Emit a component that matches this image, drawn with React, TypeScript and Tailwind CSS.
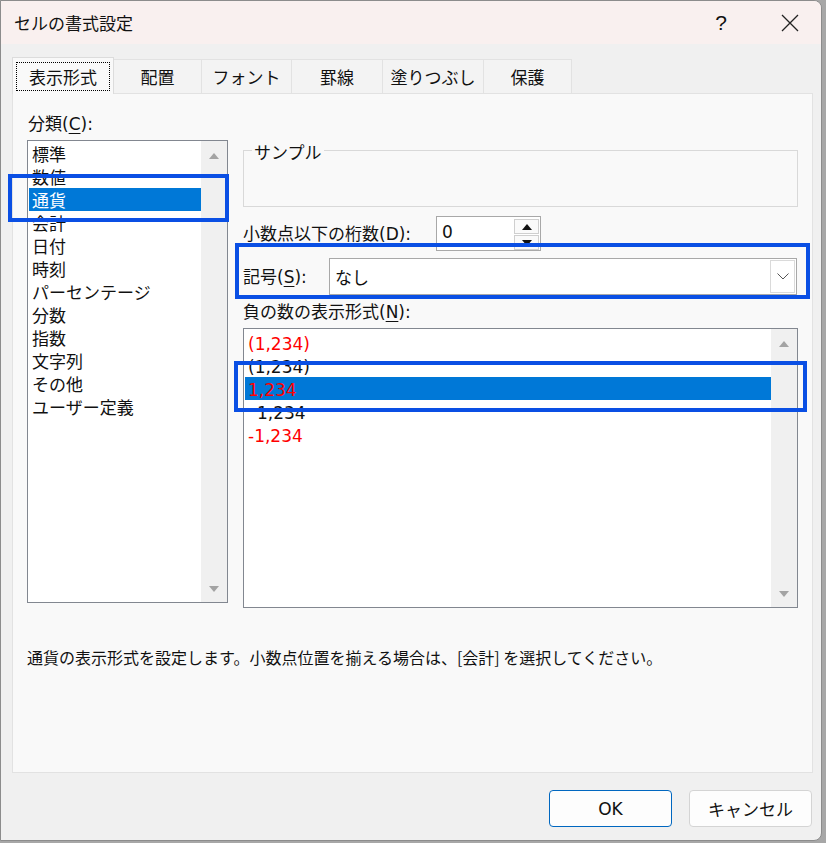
import React from "react";

const CATEGORIES = ["標準", "数値", "通貨", "会計", "日付", "時刻", "パーセンテージ", "分数", "指数", "文字列", "その他", "ユーザー定義"];

const NEGATIVES = [
  { text: "(1,234)", red: true, indent: false },
  { text: "(1,234)", red: false, indent: false },
  { text: "1,234", red: true, indent: false },
  { text: "1,234", red: false, indent: true },
  { text: "-1,234", red: true, indent: false },
];

const TABS = [
  { label: "表示形式", w: "w-[102px]" },
  { label: "配置", w: "w-[88px]" },
  { label: "フォント", w: "w-[90px]" },
  { label: "罫線", w: "w-[91px]" },
  { label: "塗りつぶし", w: "w-[101px]" },
  { label: "保護", w: "w-[88px]" },
];

const latin = "font-['DejaVu_Sans',sans-serif]";

function Tri({ down = false, color = "#a3a3a3" }: { down?: boolean; color?: string }) {
  return (
    <svg width="12" height="8" viewBox="0 0 12 8">
      <polygon points={down ? "1,1 11,1 6,7" : "1,7 11,7 6,1"} fill={color} />
    </svg>
  );
}

function Scrollbar() {
  return (
    <div className="w-[26px] bg-[#f0f0f0] flex flex-col justify-between items-center pt-[11px] pb-[9px]">
      <Tri />
      <Tri down />
    </div>
  );
}

// accelerator label like "(C):"
function Acc({ k }: { k: string }) {
  return (
    <span className={latin}>
      (<span className="underline underline-offset-[3px]">{k}</span>):
    </span>
  );
}

export default function App() {
  return (
    <div className="relative w-[826px] h-[843px] bg-[#a7a7a7] font-['Noto_Sans_CJK_JP',sans-serif] text-[#111] overflow-hidden">
      <div className="w-[822px] h-[841px] bg-[#f0f0f0] border border-[#8c8c8c] rounded-r-[8px] overflow-hidden flex flex-col">
        {/* title bar */}
        <div className="h-[43px] bg-[#f9f0ef] flex items-center pl-[13px] text-[17px] leading-[23px]">
          <span className="flex-1">セルの書式設定</span>
          <span className="w-[20px] text-center mr-[50px] text-[21px] font-['Liberation_Sans',sans-serif]">?</span>
          <svg width="18" height="18" viewBox="0 0 18 18" className="mr-[22px]">
            <path d="M1 1 L17 17 M17 1 L1 17" stroke="#222" strokeWidth="1.3" />
          </svg>
        </div>

        {/* tabs */}
        <div className="mt-[13px] ml-[11px] flex items-end h-[36px] text-[17px]">
          {TABS.map((t, i) =>
            i === 0 ? (
              <div
                key={t.label}
                className={`${t.w} h-[37px] -mb-px relative z-10 bg-[#f9f9f9] border border-b-0 border-[#dcdcdc] px-[3px] pt-[4px]`}
              >
                <div className="h-[29px] border border-dotted border-black flex items-center justify-center leading-[23px]">
                  {t.label}
                </div>
              </div>
            ) : (
              <div
                key={t.label}
                className={`${t.w} h-[34px] bg-[#f3f3f3] border-t border-r border-[#e2e2e2] flex items-center justify-center leading-[23px]`}
              >
                {t.label}
              </div>
            )
          )}
        </div>

        {/* panel */}
        <div className="ml-[11px] w-[801px] h-[680px] bg-[#f9f9f9] border border-[#e2e2e2] flex flex-col">
          <div className="flex text-[17px]">
            {/* left column */}
            <div className="ml-[14px] w-[201px]">
              <div className="mt-[17px] h-[23px] leading-[23px] pl-px">
                分類<Acc k="C" />
              </div>
              <div className="mt-[6px] h-[463px] bg-white border border-[#828790] flex">
                <div className="flex-1 pt-px">
                  {CATEGORIES.map((c, i) => (
                    <div
                      key={c}
                      className={`ml-px h-[23px] leading-[23px] pl-[3px] ${i === 2 ? "bg-[#0078d7] text-white" : ""}`}
                    >
                      {c}
                    </div>
                  ))}
                </div>
                <Scrollbar />
              </div>
            </div>

            {/* right column */}
            <div className="ml-[15px] w-[555px]">
              <div className="relative mt-[56px] h-[57px] border border-[#d9d9d9]">
                <span className="absolute -top-[11px] left-[8px] bg-[#f9f9f9] px-[2px] leading-[23px]">サンプル</span>
              </div>

              <div className="mt-[9px] h-[35px] flex items-center">
                <div className="w-[193px] leading-[23px]">
                  小数点以下の桁数<Acc k="D" />
                </div>
                <div className="w-[105px] h-[35px] bg-white border border-[#a8a8a8] flex">
                  <div className="flex-1 pl-[5px] leading-[27px]">
                    <span className={latin}>0</span>
                  </div>
                  <div className="w-[26px] flex flex-col gap-px pt-[2px] pr-px">
                    <div className="h-[15px] border border-[#cfcfcf] bg-[#fafafa] flex items-center justify-center">
                      <Tri color="#111" />
                    </div>
                    <div className="h-[15px] border border-[#cfcfcf] bg-[#fafafa] flex items-center justify-center">
                      <Tri down color="#111" />
                    </div>
                  </div>
                </div>
              </div>

              <div className="mt-[7px] h-[37px] flex items-center">
                <div className="w-[86px] leading-[23px]">
                  記号<Acc k="S" />
                </div>
                <div className="w-[468px] h-[37px] bg-white border border-[#a8a8a8] flex items-center">
                  <div className="flex-1 pl-[5px] leading-[23px]">なし</div>
                  <div className="w-[25px] h-[33px] mr-px border border-[#dadada] flex items-center justify-center">
                    <svg width="12" height="7" viewBox="0 0 12 7">
                      <path d="M0.5 0.5 L6 6 L11.5 0.5" stroke="#555" strokeWidth="1" fill="none" />
                    </svg>
                  </div>
                </div>
              </div>

              <div className="h-[33px] flex items-center leading-[23px]">
                <span>
                  負の数の表示形式<Acc k="N" />
                </span>
              </div>

              <div className="h-[280px] bg-white border border-[#828790] flex">
                <div className="flex-1 pt-[2px]">
                  {NEGATIVES.map((n, i) => (
                    <div
                      key={i}
                      className={`ml-px h-[23px] leading-[23px] ${n.indent ? "pl-[12px]" : "pl-[3px]"} ${
                        n.red ? "text-[#ff0000]" : "text-[#111]"
                      } ${i === 2 ? "bg-[#0078d7]" : ""}`}
                    >
                      <span className={latin}>{n.text}</span>
                    </div>
                  ))}
                </div>
                <Scrollbar />
              </div>
            </div>
          </div>

          <div className="mt-[37px] ml-[14px] text-[16px] leading-[24px]">
            通貨の表示形式を設定します。小数点位置を揃える場合は、[会計] を選択してください。
          </div>
        </div>

        {/* buttons */}
        <div className="mt-[17px] flex justify-end gap-[17px] pr-[9px] text-[17px]">
          <button className="w-[123px] h-[37px] rounded-[4px] bg-[#fdfdfd] border border-[#0067c0] leading-[23px]">
            <span className={latin}>OK</span>
          </button>
          <button className="w-[123px] h-[37px] rounded-[4px] bg-[#fdfdfd] border border-[#d4d4d4] leading-[23px]">キャンセル</button>
        </div>
      </div>

      {/* annotation highlights */}
      <div className="absolute left-[8px] top-[174px] w-[221px] h-[48px] border-[4px] border-[#0a4fe4]" />
      <div className="absolute left-[235px] top-[243px] w-[575px] h-[56px] border-[4px] border-[#0a4fe4]" />
      <div className="absolute left-[234px] top-[361px] w-[573px] h-[51px] border-[4px] border-[#0a4fe4]" />
    </div>
  );
}
